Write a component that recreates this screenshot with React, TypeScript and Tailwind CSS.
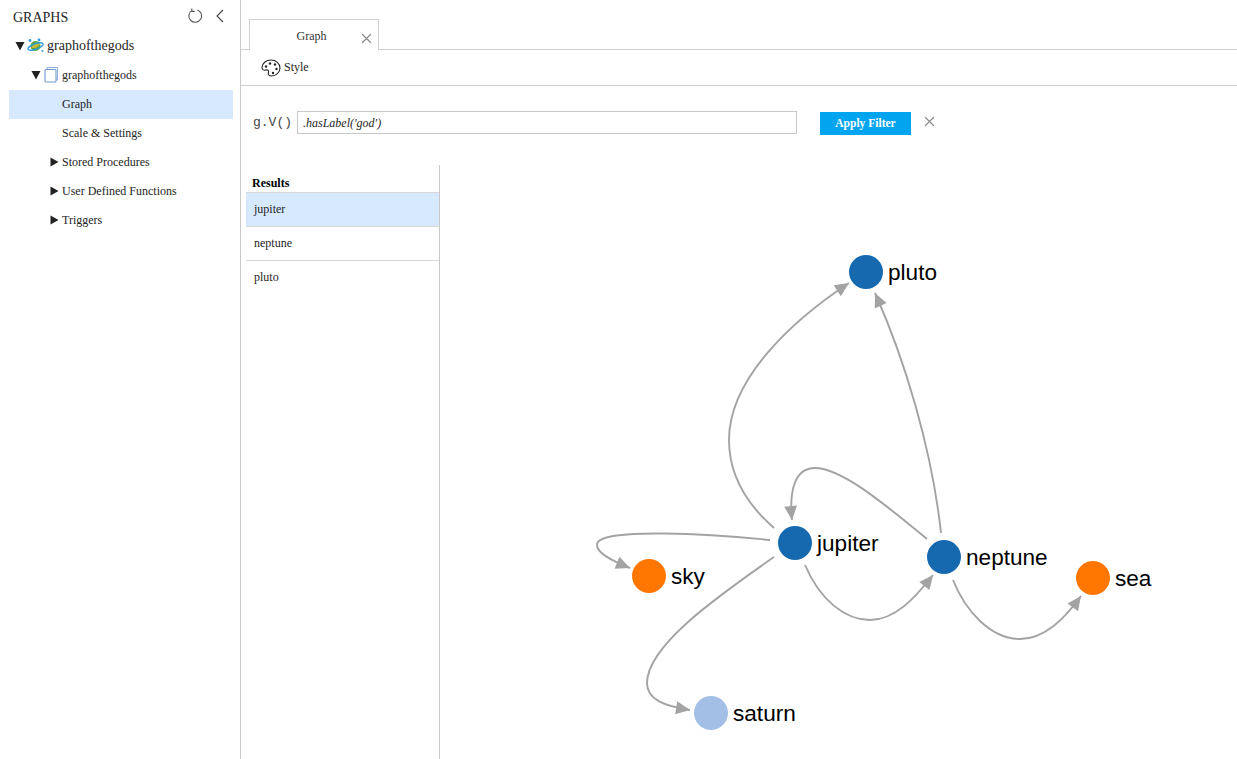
import React from "react";

const serif = "font-['Liberation_Serif','Times_New_Roman',serif]";

function TriDown({ size = 10 }: { size?: number }) {
  return (
    <svg width={size} height={size} viewBox="0 0 10 10" className="shrink-0">
      <polygon points="0.5,1 9.5,1 5,9.5" fill="#222" />
    </svg>
  );
}

function TriRight() {
  return (
    <svg width="9" height="10" viewBox="0 0 9 10" className="shrink-0">
      <polygon points="0.5,0.5 8.5,5 0.5,9.5" fill="#222" />
    </svg>
  );
}

function Close({ size = 11, color = "#888" }: { size?: number; color?: string }) {
  return (
    <svg width={size} height={size} viewBox="0 0 11 11">
      <path d="M1 1L10 10M10 1L1 10" stroke={color} strokeWidth="1.1" fill="none" />
    </svg>
  );
}

function Cosmos() {
  return (
    <svg width="17" height="15" viewBox="0 0 17 15" className="shrink-0">
      <circle cx="8.5" cy="8" r="5" fill="#5aa83c" />
      <path d="M4 9.5 C6 6 10 5 13 6 C12 9 8 11 4 9.5Z" fill="#c9b63a" />
      <ellipse cx="8.5" cy="8.5" rx="8" ry="2.7" transform="rotate(-20 8.5 8.5)" fill="none" stroke="#2f9be0" strokeWidth="1.3" />
      <circle cx="3" cy="2.5" r="1.4" fill="#2f9be0" />
      <circle cx="12" cy="2" r="1.4" fill="#2f9be0" />
      <circle cx="15.5" cy="13" r="1" fill="#2f9be0" />
    </svg>
  );
}

function Doc() {
  return (
    <svg width="15" height="17" viewBox="0 0 15 17" className="shrink-0">
      <path d="M3 3V1.5H13.5V14H12" fill="none" stroke="#8fb0d8" strokeWidth="1" />
      <rect x="1" y="3.5" width="11" height="12.5" rx="1" fill="#fff" stroke="#6f9bd1" strokeWidth="1.1" />
    </svg>
  );
}

function Row({
  indent,
  children,
  selected,
  text = "text-[12px]",
}: {
  indent: string;
  children: React.ReactNode;
  selected?: boolean;
  text?: string;
}) {
  return (
    <div
      className={`h-[29px] pb-[2px] flex items-center text-[#252525] ${text} ${indent} ${selected ? "bg-[#d6e9ff]" : ""}`}
    >
      {children}
    </div>
  );
}

const EDGES = [
  "M774 528 C742 500 729 470 729 440 C729 380 790 322 849 283",
  "M941 533 C932 450 905 360 875 293",
  "M927 539 C880 500 840 468 815 468 C795 468 789 490 792 520",
  "M770 540 C720 535 596 526 597 545 C597 553 610 560 630 568",
  "M774 557 C720 595 647 645 647 683 C647 700 665 706 690 710",
  "M805 565 C820 600 845 620 870 620 C895 620 915 598 933 575",
  "M953 580 C965 610 990 639 1020 639 C1045 639 1065 618 1081 596",
];

const NODES = [
  { x: 795, y: 543, c: "#1669ae", t: "jupiter" },
  { x: 866, y: 272, c: "#1669ae", t: "pluto" },
  { x: 944, y: 557, c: "#1669ae", t: "neptune" },
  { x: 649, y: 576, c: "#ff7600", t: "sky" },
  { x: 1093, y: 578, c: "#ff7600", t: "sea" },
  { x: 711, y: 713, c: "#a3bfe6", t: "saturn" },
];

export default function App() {
  return (
    <div className={`${serif} w-[1237px] h-[759px] flex bg-white overflow-hidden`}>
      <aside className="w-[241px] shrink-0 border-r border-[#c8c8c8] flex flex-col">
        <div className="h-[32px] flex items-center justify-between pl-[13px] pr-[16px]">
          <span className="text-[14px] text-[#252525] mt-[2px]">GRAPHS</span>
          <div className="flex items-center gap-[13px]">
            <svg width="16" height="16" viewBox="0 0 16 16">
              <path d="M4.6 2.6 A6.4 6.4 0 1 0 10.5 1.9" fill="none" stroke="#555" strokeWidth="1.1" />
              <path d="M4.8 0.6 L4.8 3.4 L7.8 3.4" fill="none" stroke="#555" strokeWidth="1.1" />
            </svg>
            <svg width="8" height="14" viewBox="0 0 8 14">
              <path d="M7 1L1 7L7 13" fill="none" stroke="#444" strokeWidth="1.1" />
            </svg>
          </div>
        </div>
        <div className="pl-[9px] pr-[7px]">
          <Row indent="pl-[6px] gap-[2px]" text="text-[14px]">
            <TriDown />
            <Cosmos />
            <span className="ml-[1px]">graphofthegods</span>
          </Row>
          <Row indent="pl-[22px] gap-[3px]">
            <TriDown />
            <Doc />
            <span>graphofthegods</span>
          </Row>
          <Row indent="pl-[53px]" selected>Graph</Row>
          <Row indent="pl-[53px]">Scale &amp; Settings</Row>
          <Row indent="pl-[41px] gap-[3px]"><TriRight /><span>Stored Procedures</span></Row>
          <Row indent="pl-[41px] gap-[3px]"><TriRight /><span>User Defined Functions</span></Row>
          <Row indent="pl-[41px] gap-[3px]"><TriRight /><span>Triggers</span></Row>
        </div>
      </aside>

      <main className="flex-1 min-w-0 flex flex-col">
        <div className="h-[50px] shrink-0 border-b border-[#d0d0d0] pt-[19px] pl-[8px] flex">
          <div className="relative w-[130px] h-[31px] bg-white border border-b-0 border-[#d0d0d0] flex items-center justify-center text-[12px] text-[#333] pr-[5px] pt-[1px]">
            Graph
            <span className="absolute right-[6px] top-[13px] flex"><Close /></span>
          </div>
        </div>
        <div className="h-[36px] shrink-0 border-b border-[#d0d0d0] flex items-center pl-[20px] gap-[3px] text-[12px] text-[#252525]">
          <svg width="20" height="20" viewBox="0 0 20 20" className="mt-[1px]">
            <path d="M10 2 C5 2 1 5.5 1 9.5 C1 12 3 12.5 5 12 C7 11.6 8 12.7 7.4 14.5 C6.8 16.5 8 18 10.5 18 C15 18 19 14.5 19 10 C19 5.5 15 2 10 2Z" fill="none" stroke="#222" strokeWidth="1.1" />
            <circle cx="5" cy="8.5" r="1.2" fill="#222" />
            <circle cx="9" cy="5.5" r="1.2" fill="#222" />
            <circle cx="14" cy="6.5" r="1.2" fill="#222" />
            <circle cx="15.5" cy="11" r="1.2" fill="#222" />
            <circle cx="12" cy="15" r="1.2" fill="#222" />
          </svg>
          <span className="-mt-[1px]">Style</span>
        </div>

        <div className="h-[79px] shrink-0 flex items-start pt-[25px] pl-[12px]">
          <span className="font-['Liberation_Mono','Courier_New',monospace] text-[13px] leading-[23px] text-[#444] w-[44px]">g.V()</span>
          <div className="w-[500px] h-[23px] border border-[#c8c8c8] flex items-center pl-[5px] text-[12px] italic text-[#252525]">
            .hasLabel('god')
          </div>
          <div className="ml-[23px] mt-[1px] w-[91px] h-[23px] pt-[1px] bg-[#00a4ef] text-white text-[11.5px] font-bold flex items-center justify-center">
            Apply Filter
          </div>
          <span className="ml-[13px] mt-[5px] flex"><Close /></span>
        </div>

        <div className="flex-1 min-h-0 flex">
          <div className="w-[199px] shrink-0 pl-[5px] border-r border-[#c8c8c8]">
            <div className="h-[28px] flex items-end pl-[6px] border-b border-[#d8d8d8] text-[12px] font-bold text-black">Results</div>
            <div className="h-[34px] pb-[2px] flex items-center pl-[8px] bg-[#d6e9ff] border-b border-[#d8d8d8] text-[12px] text-[#252525]">jupiter</div>
            <div className="h-[34px] pb-[2px] flex items-center pl-[8px] border-b border-[#d8d8d8] text-[12px] text-[#252525]">neptune</div>
            <div className="h-[34px] pb-[2px] flex items-center pl-[8px] text-[12px] text-[#252525]">pluto</div>
          </div>
          <div className="flex-1 min-w-0">
            <svg width="797" height="594" viewBox="440 165 797 594" className="block">
              <defs>
                <marker id="arrow" markerUnits="userSpaceOnUse" markerWidth="16" markerHeight="16" refX="15" refY="8" orient="auto">
                  <polygon points="1,1.5 15,8 1,14.5" fill="#a3a3a3" />
                </marker>
              </defs>
              {EDGES.map((d) => (
                <path key={d} d={d} fill="none" stroke="#a3a3a3" strokeWidth="1.9" markerEnd="url(#arrow)" />
              ))}
              {NODES.map((n) => (
                <g key={n.t}>
                  <circle cx={n.x} cy={n.y} r="17" fill={n.c} />
                  <text x={n.x + 22} y={n.y + 8} fontSize="22.6" fill="#000" fontFamily="'Liberation Sans', Arial, sans-serif">
                    {n.t}
                  </text>
                </g>
              ))}
            </svg>
          </div>
        </div>
      </main>
    </div>
  );
}
